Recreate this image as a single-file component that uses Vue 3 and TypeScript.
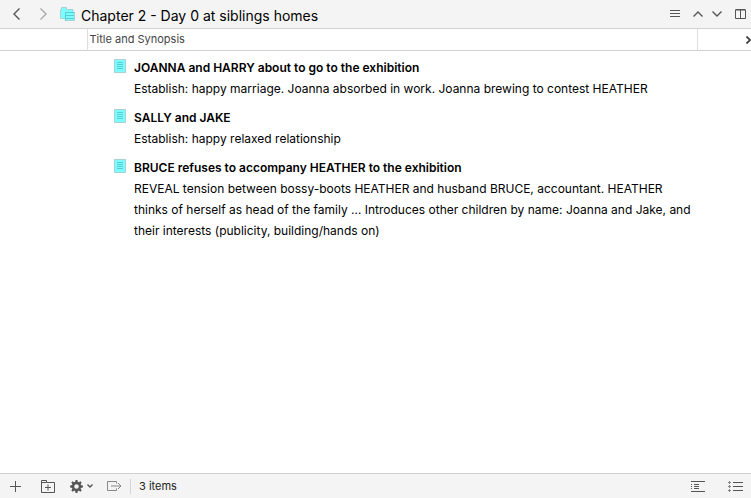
<script setup lang="ts">
interface OutlineItem {
  title: string
  synopsis: string
}

const items: OutlineItem[] = [
  {
    title: 'JOANNA and HARRY about to go to the exhibition',
    synopsis: 'Establish: happy marriage. Joanna absorbed in work. Joanna brewing to contest HEATHER',
  },
  {
    title: 'SALLY and JAKE',
    synopsis: 'Establish: happy relaxed relationship',
  },
  {
    title: 'BRUCE refuses to accompany HEATHER to the exhibition',
    synopsis:
      'REVEAL tension between bossy-boots HEATHER and husband BRUCE, accountant. HEATHER thinks of herself as head of the family … Introduces other children by name: Joanna and Jake, and their interests (publicity, building/hands on)',
  },
]

const gearTeeth: number[] = [0, 45, 90, 135, 180, 225, 270, 315]
</script>

<template>
  <div class="outliner">
    <header class="bar top">
      <button class="tool nav" aria-label="Back">
        <svg class="thick" width="8" height="12" viewBox="0 0 8 12"><path d="M6.500 .5 1 6l5.500 5.500" /></svg>
      </button>
      <button class="tool nav dim" aria-label="Forward">
        <svg class="thick" width="8" height="12" viewBox="0 0 8 12"><path d="M1.500 .5 7 6l-5.500 5.500" /></svg>
      </button>
      <svg class="folder" width="15" height="14" viewBox="0 0 15 14" aria-hidden="true">
        <path class="sheet" d="M.5 11.500V2.500h1V.5h5v2h6.500v9z" />
        <path class="sheet" d="M5.500 5.500h9v8h-9z" />
        <path class="lines" d="M5.500 5.500h9M6 8.500h8M6 11.500h8M5.500 5.500v8" />
      </svg>
      <h1>Chapter 2 - Day 0 at siblings homes</h1>
      <div class="group">
        <button class="tool" aria-label="Menu">
          <svg width="10" height="8" viewBox="0 0 10 8"><path d="M0 .5h10M0 3.500h10M0 6.500h10" /></svg>
        </button>
        <div class="pair">
          <button class="tool" aria-label="Previous">
            <svg class="thick" width="10" height="6" viewBox="0 0 10 6"><path d="M.5 5.500 5 1l4.500 4.500" /></svg>
          </button>
          <button class="tool" aria-label="Next">
            <svg class="thick" width="10" height="6" viewBox="0 0 10 6"><path d="M.5 .5 5 5 9.500 .5" /></svg>
          </button>
        </div>
        <button class="tool" aria-label="Split view">
          <svg width="11" height="10" viewBox="0 0 11 10"><path d="M.5 1h10v8.500H.5zM.5 .5h10M5.500 1v8.500" /></svg>
        </button>
      </div>
    </header>

    <main>
      <table>
        <colgroup>
          <col class="margin-col" />
          <col />
          <col class="more-col" />
        </colgroup>
        <thead>
          <tr>
            <td></td>
            <th scope="col">Title and Synopsis</th>
            <td>
              <button class="tool more" aria-label="More columns">
                <svg width="5" height="8" viewBox="0 0 5 8"><path d="M.5 .5 4 4 .5 7.500" /></svg>
              </button>
            </td>
          </tr>
        </thead>
        <tbody>
          <tr v-for="item in items" :key="item.title">
            <td></td>
            <td>
              <div class="entry">
                <svg class="page" width="12" height="14" viewBox="0 0 12 14" aria-hidden="true">
                  <path class="sheet" d="M.5 .5h11v13H.5z" />
                  <path class="lines" d="M3 3.500h6M3 5.500h6M3 7.500h6M3 9.500h6" />
                </svg>
                <div>
                  <h2>{{ item.title }}</h2>
                  <p>{{ item.synopsis }}</p>
                </div>
              </div>
            </td>
            <td></td>
          </tr>
        </tbody>
      </table>
    </main>

    <footer class="bar bottom">
      <button class="tool" aria-label="Add item">
        <svg width="11" height="11" viewBox="0 0 11 11"><path d="M5.500 0v11M0 5.500h11" /></svg>
      </button>
      <button class="tool add-folder" aria-label="Add folder">
        <svg width="14" height="13" viewBox="0 0 14 13">
          <path d="M.5 12.500V.5h5v2h8v10zM.5 2.500h5M7 4.500v6M4 7.500h6" />
        </svg>
      </button>
      <button class="tool actions" aria-label="Actions">
        <svg width="13" height="13" viewBox="-6.500 -6.500 13 13">
          <circle class="gear-ring" r="3.500" />
          <path
            v-for="angle in gearTeeth"
            :key="angle"
            class="gear-tooth"
            d="M-1.400-4-.9-6.400H.9L1.400-4z"
            :transform="`rotate(${angle})`"
          />
        </svg>
        <svg class="thick" width="6" height="4" viewBox="0 0 6 4"><path d="M.5 .5 3 3 5.500 .5" /></svg>
      </button>
      <button class="tool export" aria-label="Move to">
        <svg width="15" height="10" viewBox="0 0 15 10">
          <path d="M9.500 2.500v-2h-9v9h9v-2M4 5h10M11 2l3 3-3 3" />
        </svg>
      </button>
      <span class="count">3 items</span>
      <div class="group">
        <button class="tool" aria-label="Synopsis view">
          <svg width="14" height="11" viewBox="0 0 14 11">
            <path d="M0 .5h14M0 10.500h14M3 3.500h5M3 5.500h5M3 7.500h5M0 3.500h1M0 5.500h1M0 7.500h1" />
          </svg>
        </button>
        <button class="tool" aria-label="List view">
          <svg width="15" height="11" viewBox="0 0 15 11">
            <path d="M5 1.500h10M5 5.500h10M5 9.500h10" />
            <path class="dots" d="M0 1.500h3M0 5.500h3M0 9.500h3M1.500 0v3M1.500 4v3M1.500 8v3" />
          </svg>
        </button>
      </div>
    </footer>
  </div>
</template>

<style>
body {
  margin: 0;
}
</style>

<style scoped>
.outliner {
  display: flex;
  flex-direction: column;
  min-height: 100vh;
  overflow: hidden;
  background: #fff;
  color: #000;
  font-family: Inter, "Liberation Sans", sans-serif;
  font-size: 12px;
}

.bar {
  display: flex;
  align-items: center;
  box-sizing: border-box;
  background: #f4f4f4;
}

.top {
  height: 29px;
  padding: 0 5px 0 13px;
  border-bottom: 1px solid #d0d0d0;
}

.bottom {
  height: 25px;
  padding: 0 8px 0 10px;
  border-top: 1px solid #d0d0d0;
}

.tool {
  display: flex;
  align-items: center;
  margin: 0;
  padding: 0;
  border: 0;
  background: none;
  color: #555;
}

svg {
  display: block;
  flex: none;
  fill: none;
  stroke: currentColor;
}

.thick {
  stroke-width: 1.4;
}

.nav {
  margin-right: 18px;
}

.dim {
  margin-right: 13px;
  color: #aaa;
}

h1 {
  flex: 1;
  margin: 0;
  padding: 3px 0 0 6px;
  font-size: 14px;
  font-weight: 400;
  line-height: 20px;
  white-space: nowrap;
}

.group,
.pair {
  display: flex;
  align-items: center;
}

.group {
  gap: 13px;
  margin-left: auto;
}

.pair {
  gap: 9px;
}

.bottom .group {
  gap: 23px;
}

main {
  flex: 1;
}

table {
  width: 100%;
  border-collapse: collapse;
  table-layout: fixed;
}

.margin-col {
  width: 87px;
}

.more-col {
  width: 54px;
}

td,
th {
  padding: 0;
  text-align: left;
  vertical-align: top;
}

thead tr {
  height: 22px;
  box-shadow: inset 0 -1px #d0d0d0;
}

thead th {
  padding-left: 2px;
  border: solid #ddd;
  border-width: 0 1px;
  color: #444;
  font-size: 11px;
  font-weight: 400;
  line-height: 20px;
}

.more {
  margin: 7px 0 0 auto;
  color: #333;
}

.more svg {
  stroke-width: 1.6;
}

.entry {
  display: flex;
  gap: 8px;
  padding: 6px 0 2px 27px;
}

.page {
  margin-top: 2px;
}

.sheet {
  fill: #7dfcfd;
  stroke: #a6d2d4;
}

.lines {
  stroke: #55cfd2;
}

h2,
p {
  margin: 0;
  font-size: 12px;
  line-height: 21px;
}

h2 {
  font-weight: 600;
}

.add-folder {
  margin-left: 20px;
}

.actions {
  gap: 4px;
  margin-left: 15px;
}

.gear-ring {
  stroke-width: 2.4;
}

.gear-tooth {
  fill: currentColor;
  stroke: none;
}

.export {
  margin-left: 14px;
  color: #888;
}

.count {
  margin-left: 8px;
  padding-left: 8px;
  border-left: 1px solid #d4d4d4;
  color: #222;
  font-size: 11px;
  line-height: 15px;
}

.dots {
  stroke: #888;
}
</style>
